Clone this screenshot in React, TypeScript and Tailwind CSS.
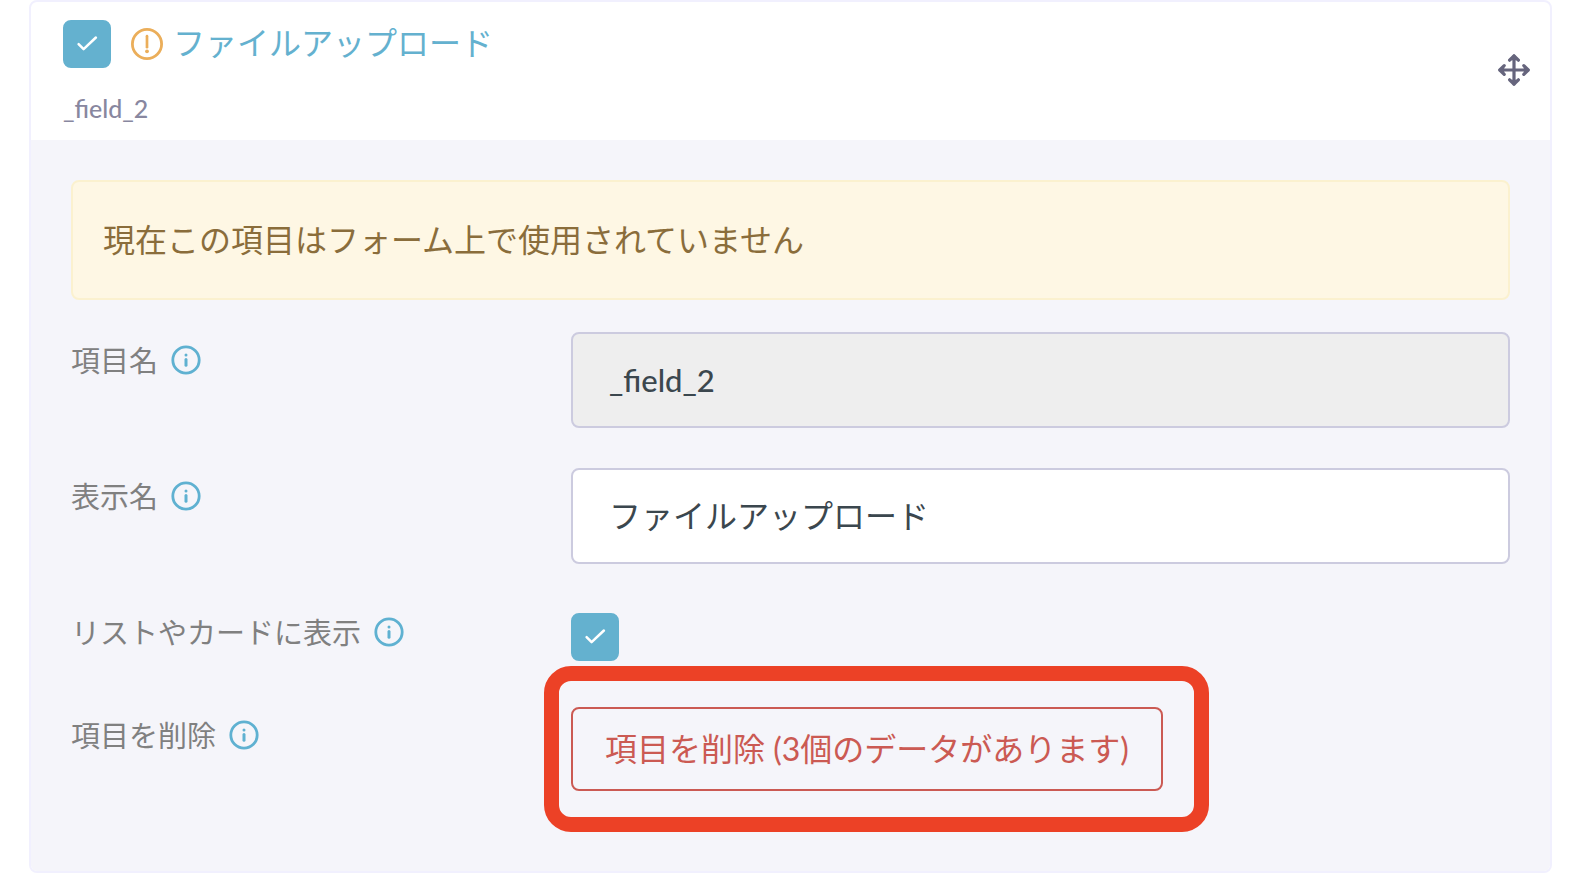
import { useState, type ReactNode } from "react";

function CheckBox({ id, label }: { id: string; label?: string }) {
  const [checked, setChecked] = useState(true);
  return (
    <span className="relative block size-12 shrink-0">
      <input
        id={id}
        type="checkbox"
        aria-label={label}
        checked={checked}
        onChange={(e) => setChecked(e.target.checked)}
        className="block size-12 cursor-pointer appearance-none rounded-lg border-2 border-[#64b1cf] bg-white checked:bg-[#64b1cf]"
      />
      {checked && (
        <svg viewBox="0 0 48 48" className="pointer-events-none absolute inset-0 size-12" fill="none" stroke="#fff" strokeWidth="2.5" strokeLinecap="round" strokeLinejoin="round" aria-hidden="true">
          <path d="M15.6 24.1 20.6 29.2 32.9 17.5" />
        </svg>
      )}
    </span>
  );
}

function WarningIcon() {
  return (
    <svg viewBox="0 0 32 32" className="size-8 shrink-0" fill="none" stroke="#ebae5a" aria-hidden="true">
      <circle cx="16" cy="16" r="14.6" strokeWidth="2.8" />
      <path d="M16 8.2v11" strokeWidth="2.7" strokeLinecap="round" />
      <circle cx="16" cy="23.3" r="1.9" fill="#ebae5a" stroke="none" />
    </svg>
  );
}

function InfoIcon() {
  return (
    <svg viewBox="0 0 30 30" className="size-[30px] shrink-0" fill="none" stroke="#5fb1d1" aria-hidden="true">
      <circle cx="15" cy="15" r="13.2" strokeWidth="2.8" />
      <circle cx="15" cy="9.9" r="1.5" fill="#5fb1d1" stroke="none" />
      <path d="M15 14.6v5.6" strokeWidth="3" strokeLinecap="round" />
    </svg>
  );
}

function MoveIcon() {
  return (
    <svg viewBox="0 0 32 32" className="size-8" fill="none" stroke="#66657d" strokeWidth="3.2" strokeLinecap="round" strokeLinejoin="round" aria-hidden="true">
      <path d="M16 2v28M2 16h28" />
      <path fill="#66657d" d="M11.6 6.2 16 1.8l4.4 4.4M11.6 25.8 16 30.2l4.4-4.4M6.2 11.6 1.8 16l4.4 4.4M25.8 11.6l4.4 4.4-4.4 4.4" />
    </svg>
  );
}

function FieldRow({ id, label, children }: { id: string; label: string; children: ReactNode }) {
  return (
    <div className="flex items-start">
      <div className="flex h-14 w-[500px] shrink-0 items-center gap-[13px]">
        <label htmlFor={id} className="pt-0.5 text-[29px] leading-10 text-[#808080]">
          {label}
        </label>
        <InfoIcon />
      </div>
      <div className="min-w-0 flex-1">{children}</div>
    </div>
  );
}

export default function App() {
  const [name, setName] = useState("ファイルアップロード");
  return (
    <div lang="ja" className="pr-[38px] pb-5 pl-[29px] font-['Lato','Noto_Sans_CJK_JP',sans-serif]">
      <section className="rounded-lg border-2 border-[#f1f0fe] bg-white">
        <header className="flex items-center justify-between pt-[18px] pr-5 pb-3 pl-8">
          <div>
            <div className="flex items-center gap-5">
              <CheckBox id="enabled" label="ファイルアップロード" />
              <div className="flex items-center gap-2.5">
                <WarningIcon />
                <a href="#field" className="pb-0.5 text-[32px] leading-[46px] text-[#64b1cf]">
                  ファイルアップロード
                </a>
              </div>
            </div>
            <p className="mt-5 text-[25px] leading-10 font-medium text-[#88879f]">_field_2</p>
          </div>
          <button type="button" aria-label="移動" className="mb-2 cursor-move">
            <MoveIcon />
          </button>
        </header>

        <div id="field" className="rounded-b-md bg-[#f5f5fa] px-10 pt-10 pb-20">
          <p role="alert" className="rounded-lg border-2 border-[#fbf1cf] bg-[#fef7e4] px-[30px] py-[34px] text-[32px] leading-12 text-[#8a6d3b]">
            現在この項目はフォーム上で使用されていません
          </p>

          <div className="mt-8 flex flex-col gap-10">
            <FieldRow id="field-name" label="項目名">
              <input
                id="field-name"
                type="text"
                disabled
                value="_field_2"
                className="block h-24 w-full rounded-lg border-2 border-[#cccbdf] bg-[#eeeeee] px-9 text-[31px] font-medium text-[#3b474e]"
              />
            </FieldRow>
            <FieldRow id="display-name" label="表示名">
              <input
                id="display-name"
                type="text"
                value={name}
                onChange={(e) => setName(e.target.value)}
                className="block h-24 w-full rounded-lg border-2 border-[#cccbdf] bg-white px-9 pb-1 text-[32px] text-[#3b474e]"
              />
            </FieldRow>
            <FieldRow id="show-in-list" label="リストやカードに表示">
              <div className="pt-[9px] pb-[6px]">
                <CheckBox id="show-in-list" />
              </div>
            </FieldRow>
            <FieldRow id="delete-field" label="項目を削除">
              <div className="relative w-fit">
                <button
                  id="delete-field"
                  type="button"
                  className="block h-[84px] cursor-pointer rounded-lg border-2 border-[#cb5a53] px-8 text-[32px] whitespace-nowrap text-[#cb5a53]"
                >
                  項目を削除 (3個のデータがあります)
                </button>
                <div className="pointer-events-none absolute -top-[41px] -right-[46px] -bottom-[41px] -left-[27px] rounded-[27px] border-[15px] border-[#ec4126]" />
              </div>
            </FieldRow>
          </div>
        </div>
      </section>
    </div>
  );
}
